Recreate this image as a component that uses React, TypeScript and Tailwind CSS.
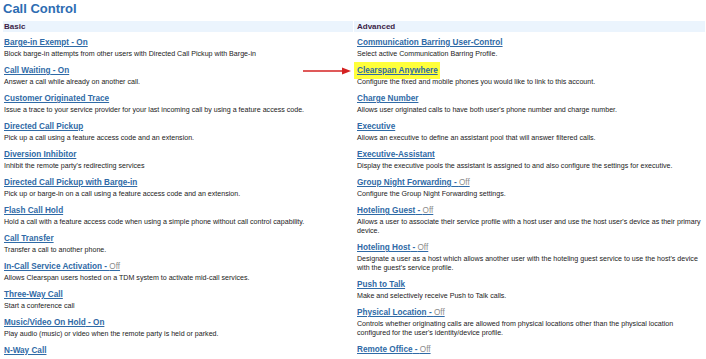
import React from 'react';

type Feature = {
  name: string;
  status?: 'On' | 'Off';
  desc: string;
  highlight?: boolean;
};

const basic: Feature[] = [
  { name: 'Barge-in Exempt', status: 'On', desc: 'Block barge-in attempts from other users with Directed Call Pickup with Barge-in' },
  { name: 'Call Waiting', status: 'On', desc: 'Answer a call while already on another call.' },
  { name: 'Customer Originated Trace', desc: 'Issue a trace to your service provider for your last incoming call by using a feature access code.' },
  { name: 'Directed Call Pickup', desc: 'Pick up a call using a feature access code and an extension.' },
  { name: 'Diversion Inhibitor', desc: "Inhibit the remote party's redirecting services" },
  { name: 'Directed Call Pickup with Barge-in', desc: 'Pick up or barge-in on a call using a feature access code and an extension.' },
  { name: 'Flash Call Hold', desc: 'Hold a call with a feature access code when using a simple phone without call control capability.' },
  { name: 'Call Transfer', desc: 'Transfer a call to another phone.' },
  { name: 'In-Call Service Activation', status: 'Off', desc: 'Allows Clearspan users hosted on a TDM system to activate mid-call services.' },
  { name: 'Three-Way Call', desc: 'Start a conference call' },
  { name: 'Music/Video On Hold', status: 'On', desc: 'Play audio (music) or video when the remote party is held or parked.' },
  { name: 'N-Way Call', desc: '' },
];

const advanced: Feature[] = [
  { name: 'Communication Barring User-Control', desc: 'Select active Communication Barring Profile.' },
  { name: 'Clearspan Anywhere', desc: 'Configure the fixed and mobile phones you would like to link to this account.', highlight: true },
  { name: 'Charge Number', desc: "Allows user originated calls to have both user's phone number and charge number." },
  { name: 'Executive', desc: 'Allows an executive to define an assistant pool that will answer filtered calls.' },
  { name: 'Executive-Assistant', desc: 'Display the executive pools the assistant is assigned to and also configure the settings for executive.' },
  { name: 'Group Night Forwarding', status: 'Off', desc: 'Configure the Group Night Forwarding settings.' },
  { name: 'Hoteling Guest', status: 'Off', desc: "Allows a user to associate their service profile with a host user and use the host user's device as their primary device." },
  { name: 'Hoteling Host', status: 'Off', desc: "Designate a user as a host which allows another user with the hoteling guest service to use the host's device with the guest's service profile." },
  { name: 'Push to Talk', desc: 'Make and selectively receive Push to Talk calls.' },
  { name: 'Physical Location', status: 'Off', desc: "Controls whether originating calls are allowed from physical locations other than the physical location configured for the user's identity/device profile." },
  { name: 'Remote Office', status: 'Off', desc: '' },
];

function FeatureItem({ f }: { f: Feature }) {
  return (
    <div className="mb-[6px]">
      <div className="h-[11px] text-[8.2px] leading-[11px]">
        <a
          href="#"
          className={
            'font-bold text-[#2f6aa6] underline underline-offset-[1px] ' +
            (f.highlight ? 'bg-[#ffff3a] pl-[3px] pr-[2px] py-[4px] -ml-[3px]' : '')
          }
        >
          {f.name}
          {f.status === 'On' && ' - On'}
          {f.status === 'Off' && (
            <>
              {' - '}
              <span className="font-normal text-[#8c8c8c]">Off</span>
            </>
          )}
        </a>
      </div>
      {f.desc && (
        <p className="mt-[2px] text-[7.1px] leading-[9px] text-[#222]">{f.desc}</p>
      )}
    </div>
  );
}

function Column({ title, items, inset }: { title: string; items: Feature[]; inset: string }) {
  return (
    <div>
      <div className={'h-[11px] bg-[#ebf4fd] text-[8px] font-bold leading-[11px] text-[#3b1d47] ' + inset}>
        {title}
      </div>
      <div className={'pt-[5px] ' + inset}>
        {items.map((f) => (
          <FeatureItem key={f.name} f={f} />
        ))}
      </div>
    </div>
  );
}

export default function App() {
  return (
    <div
      className="relative w-[706px] h-[359px] overflow-hidden bg-white pl-[3px]"
      style={{ fontFamily: '"Liberation Sans", Arial, sans-serif' }}
    >
      <h1 className="text-[13px] font-bold leading-[17px] text-[#2d6cb2]">Call Control</h1>
      <div className="mt-[4px] grid grid-cols-[350px_351px] gap-[1px]">
        <Column title="Basic" items={basic} inset="pl-[1px]" />
        <Column title="Advanced" items={advanced} inset="pl-[3px]" />
      </div>

      {/* red arrow pointing at Clearspan Anywhere */}
      <svg className="absolute left-[302px] top-[66px]" width="50" height="10" viewBox="0 0 50 10">
        <line x1="1" y1="5" x2="42" y2="5" stroke="#d42222" strokeWidth="1.4" />
        <polygon points="40,1.5 49,5 40,8.5" fill="#d42222" />
      </svg>
    </div>
  );
}
